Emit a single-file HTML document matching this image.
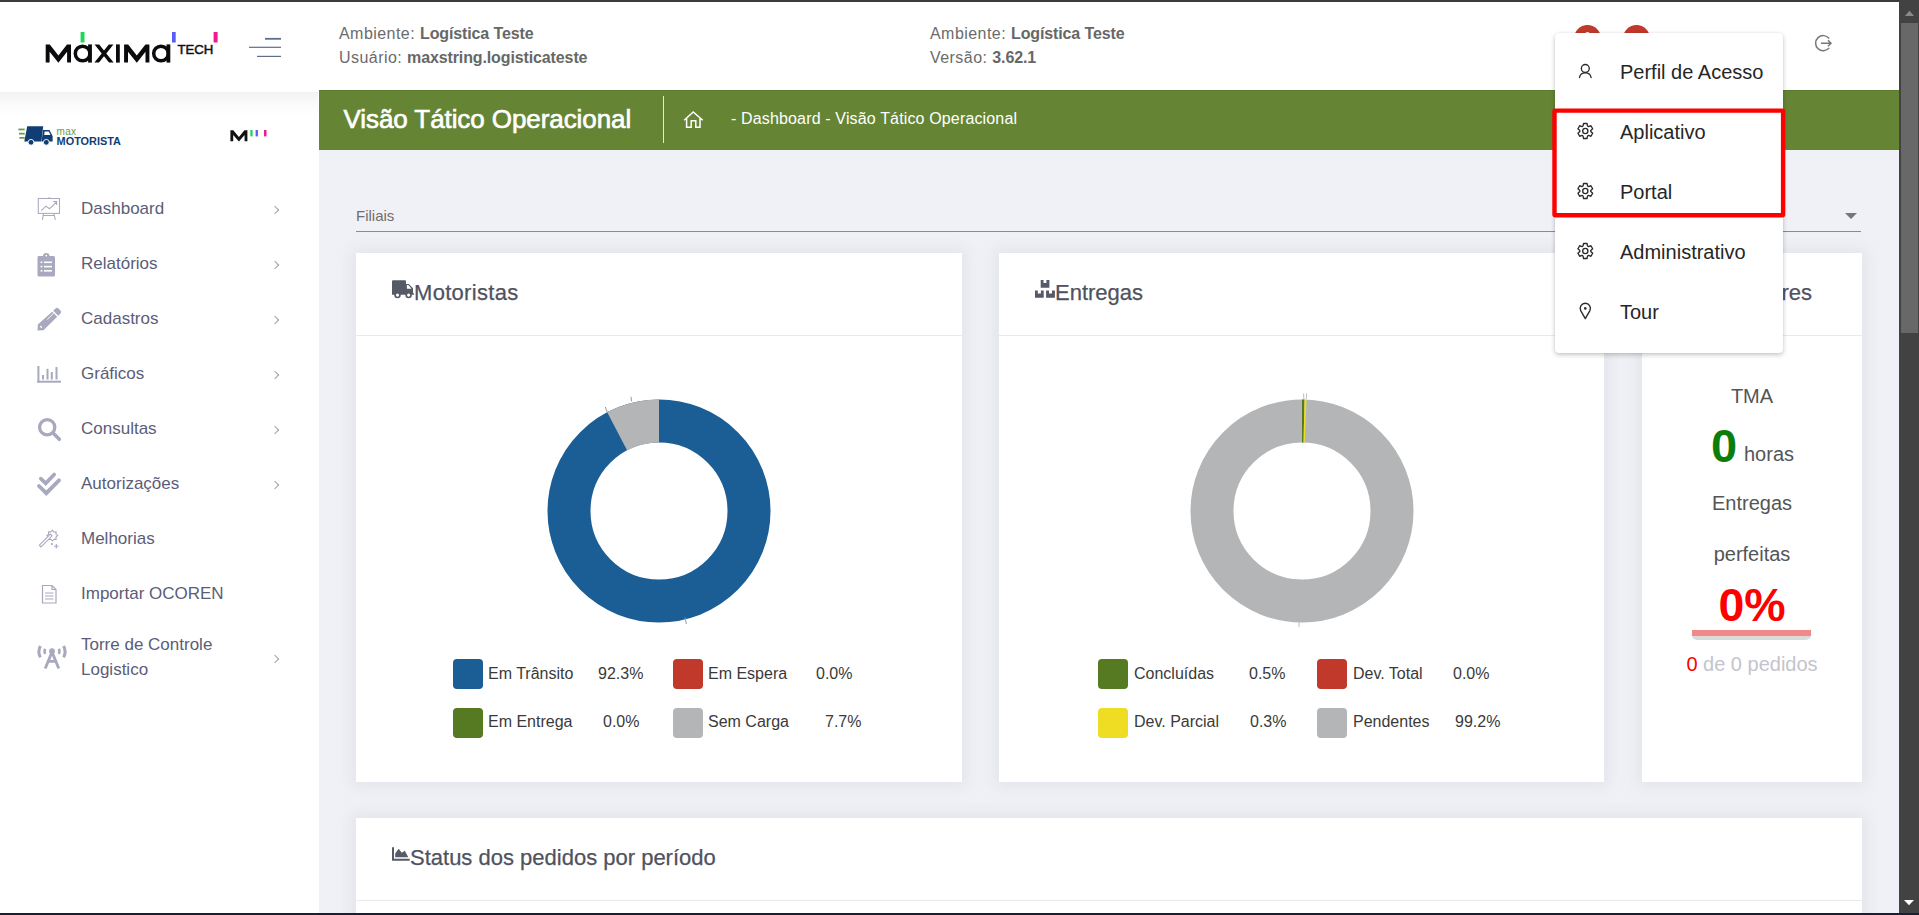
<!DOCTYPE html>
<html><head><meta charset="utf-8">
<style>
*{box-sizing:border-box;margin:0;padding:0}
html,body{width:1919px;height:915px;overflow:hidden;font-family:"Liberation Sans",sans-serif;background:#f0f1f6}
.abs{position:absolute}
.t{position:absolute;line-height:1;white-space:nowrap}
#topb{left:0;top:0;width:1919px;height:2px;background:#3c3c3c}
#botb{left:0;top:913px;width:1919px;height:2px;background:#1c1b3a}
#header{left:0;top:2px;width:1899px;height:88px;background:#fff}
#sidebar{left:0;top:90px;width:319px;height:823px;background:#fff}
#sbshadow{left:0;top:92px;width:318px;height:24px;background:linear-gradient(#f2f2f2,#fafafa 45%,#fff)}
#banner{left:319px;top:90px;width:1580px;height:60px;background:#658535;border-top:1px solid #5c7d2f}
#scroll{left:1899px;top:0;width:20px;height:913px;background:#424242}
#thumb{left:1901px;top:23px;width:17px;height:310px;background:#686868}
.card{position:absolute;background:#fff;box-shadow:0 0 14px 4px rgba(200,202,215,.35)}
.cardhd{position:absolute;left:0;top:0;right:0;height:83px;border-bottom:1px solid #e9eaf0}
.ttl{font-size:22px;color:#4f5260;-webkit-text-stroke:0.25px #4f5260}
.mt{font-size:17px;color:#5b5d78}
.ch{position:absolute;width:6px;height:6px;border-right:1.2px solid #9fa0b3;border-top:1.2px solid #9fa0b3;transform:rotate(45deg)}
.hd{font-size:16px;color:#6b6b6b}
.hd i{font-style:normal;letter-spacing:0.45px}
.hd b{color:#676767;letter-spacing:-0.12px}
.lg{font-size:16px;color:#3a3a3a}
.sq{position:absolute;width:30px;height:30px;border-radius:4px}
.dd{position:absolute;left:1555px;top:33px;width:228px;height:320px;background:#fff;border-radius:4px;box-shadow:0 2px 5px rgba(0,0,0,.22),0 0 2px rgba(0,0,0,.08)}
.di{font-size:20px;color:#262626}
svg{position:absolute;overflow:visible}
</style></head>
<body>
<div id="header" class="abs"></div>
<div id="sidebar" class="abs"></div>
<div id="sbshadow" class="abs"></div>
<div id="banner" class="abs"></div>

<!-- ===== HEADER ===== -->
<svg style="left:0;top:0" width="300" height="90">
 <g fill="none" stroke="#0b0b0d" stroke-width="3.9" stroke-linejoin="miter">
  
  <circle cx="82.6" cy="53.5" r="7.3" stroke-width="3.5"/>
  
  
  <circle cx="161" cy="53.5" r="7.3" stroke-width="3.5"/>
 </g>
 <g fill="#0b0b0d">
  <path d="M45.7 62.6 V44.4 H49.8 L58.4 55.4 L67 44.4 H71 V62.6 H67.1 V51.8 L58.4 62.8 L49.6 51.8 V62.6 Z"/>
  <rect x="88.1" y="44.4" width="3.8" height="18.2"/>
  <rect x="116" y="44.4" width="3.8" height="18.2"/><path d="M94.6 44.4 H99.2 L104 50.6 L108.8 44.4 H113.4 L106.3 53.5 L113.6 62.6 H109 L104 56.3 L99 62.6 H94.4 L101.7 53.5 Z"/>
  <path d="M124.1 62.6 V44.4 H128.2 L136.8 55.4 L145.4 44.4 H149.4 V62.6 H145.5 V51.8 L136.8 62.8 L128 51.8 V62.6 Z"/>
  <rect x="166.5" y="44.4" width="3.8" height="18.2"/>
 </g>
 <text x="177.4" y="53.9" font-family="Liberation Sans" font-size="13.2" fill="#111" stroke="#111" stroke-width="0.5">TECH</text>
 <rect x="80.6" y="32" width="3.9" height="10.5" fill="#20d558"/>
 <rect x="172" y="32" width="3.7" height="10.5" fill="#5a5cf5"/>
 <rect x="213.6" y="32" width="4" height="10.5" fill="#f5198f"/>
 <g stroke="#5d6f88">
  <line x1="265" y1="38.8" x2="281" y2="38.8" stroke-width="1.8"/>
  <line x1="249" y1="47.3" x2="281" y2="47.3" stroke-width="1.2"/>
  <line x1="257" y1="56.4" x2="281" y2="56.4" stroke-width="1.2"/>
 </g>
</svg>
<div class="t hd" style="left:339px;top:25.5px"><i>Ambiente: </i><b>Logística Teste</b></div>
<div class="t hd" style="left:339px;top:49.5px"><i>Usuário: </i><b>maxstring.logisticateste</b></div>
<div class="t hd" style="left:930px;top:25.5px"><i>Ambiente: </i><b>Logística Teste</b></div>
<div class="t hd" style="left:930px;top:49.5px"><i>Versão: </i><b>3.62.1</b></div>
<!-- red badges -->
<div class="abs" style="left:1574px;top:25px;width:27px;height:27px;border-radius:50%;background:#c0392b"></div><div class="abs" style="left:1585px;top:31.5px;width:5px;height:6px;border-radius:50%;background:#fff"></div>
<div class="abs" style="left:1622.5px;top:25px;width:27px;height:27px;border-radius:50%;background:#c0392b"></div>
<!-- logout -->
<svg style="left:1810px;top:30px" width="26" height="26" viewBox="0 0 26 26">
 <path d="M19.2 8.5 A7.6 7.6 0 1 0 19.2 17.9" fill="none" stroke="#777" stroke-width="1.5"/>
 <path d="M11 13.2 H21 M18 10.2 L21 13.2 L18 16.2" fill="none" stroke="#777" stroke-width="1.5"/>
</svg>

<!-- ===== SIDEBAR ===== -->
<svg style="left:0;top:0" width="319" height="160">
 <g fill="#6b9a3b"><rect x="18.4" y="128.6" width="6.3" height="1.7"/><rect x="19" y="132.8" width="5.7" height="1.7"/><rect x="19.4" y="137" width="5.3" height="1.7"/></g>
 <g fill="#0f3d74">
  <path d="M27.2 126.3 H43.2 L41.4 141.5 H24.3 Z"/>
  <path d="M43 130 H49.5 L52.6 136 V141.5 H41.6 Z"/>
  <circle cx="31" cy="142.3" r="2.9" stroke="#fff" stroke-width="0.9"/><circle cx="46.3" cy="142.3" r="2.9" stroke="#fff" stroke-width="0.9"/>
 </g>
 <path d="M44.6 131.4 H48.8 L50.5 135 H44.2 Z" fill="#fff"/>
 <text x="56.6" y="134.8" font-family="Liberation Sans" font-size="10" fill="#6b9a3b" letter-spacing="0.3">max</text>
 <text x="56.6" y="144.5" font-family="Liberation Sans" font-weight="bold" font-size="10.9" fill="#0f3d74">MOTORISTA</text>
 <path d="M230.4 141.3 V130.2 H233.3 L238.9 136.9 L244.5 130.2 H247.4 V141.3 H244.6 V134.9 L238.9 141.6 L233.2 134.9 V141.3 Z" fill="#111"/>
 <rect x="250.3" y="130" width="2.3" height="6.4" fill="#20d558"/>
 <rect x="255.6" y="130" width="2.3" height="6.4" fill="#5a5cf5"/>
 <rect x="264" y="130" width="2.5" height="6.4" fill="#f5198f"/>
</svg>

<!-- menu icons -->
<svg style="left:0;top:0" width="80" height="700">
 <g fill="none" stroke="#a8a9bf" stroke-width="1.2">
  <!-- dashboard easel -->
  <rect x="38.3" y="198.5" width="21.2" height="14.9" stroke-width="1.05"/>
  <path d="M41.2 210.6 L46 206.2 L49.4 208.7 L56.4 202.3 M53.3 201.6 H56.6 V205" stroke-width="1.05"/>
  <path d="M43.5 213.4 L42.5 219.8 M53.9 213.4 L55.3 219.8 M43.2 215.5 H54.2 M49.2 197 V198.5" stroke-width="1.05"/>
 </g>
 <g fill="#a8a9bf">
  <!-- clipboard -->
  <path d="M38.5 256 Q37.5 256 37.5 257.5 V275 Q37.5 276.5 39 276.5 H53.5 Q55 276.5 55 275 V257.5 Q55 256 53.5 256 H49.5 Q49.5 253 46.3 253 Q43 253 43 256 Z"/>
 </g>
 <g fill="#fff">
  <circle cx="46.3" cy="255.6" r="0.9"/><rect x="40.6" y="261.5" width="1.8" height="1.6"/><rect x="44" y="261.5" width="8" height="1.6"/>
  <rect x="40.6" y="265.8" width="1.8" height="1.6"/><rect x="44" y="265.8" width="8" height="1.6"/>
  <rect x="40.6" y="270" width="1.8" height="1.6"/><rect x="44" y="270" width="8" height="1.6"/>
 </g>
 <!-- pencil -->
 <path d="M55.5 308.5 Q57 307.2 58.5 308.5 L60.5 310.5 Q61.8 312 60.5 313.5 L58.2 315.8 L53.2 310.8 Z M52.2 311.8 L57.2 316.8 L43.5 330.3 L37.5 330.5 L37.8 324.5 Z" fill="#a8a9bf"/>
 <path d="M40.3 326 L41.8 327.8" stroke="#fff" stroke-width="1.2"/>
 <path d="M47.2 319.5 L53.5 313.5" stroke="#fff" stroke-width="0.9"/>
 <!-- chart -->
 <g fill="#a8a9bf">
  <rect x="37.4" y="366" width="2" height="16.7"/><rect x="37.4" y="380.7" width="23.6" height="2"/>
  <rect x="42" y="375" width="2" height="4.5"/><rect x="46.5" y="368.8" width="2" height="10.7"/><rect x="50.8" y="372" width="2" height="7.5"/><rect x="55.5" y="367" width="2" height="12.5"/>
 </g>
 <!-- search -->
 <circle cx="47.2" cy="427.2" r="7.6" fill="none" stroke="#a8a9bf" stroke-width="3.3"/>
 <path d="M53 433 L59.3 439.3" stroke="#a8a9bf" stroke-width="3.6" stroke-linecap="round"/>
 <!-- double check -->
 <path d="M40.8 478.6 L45.7 483.3 L54.2 474.5" fill="none" stroke="#a8a9bf" stroke-width="3.7" stroke-linecap="round"/>
 <path d="M39 486 L46.3 493.2 L59 480.3" fill="none" stroke="#a8a9bf" stroke-width="3.8" stroke-linecap="round"/>
 <!-- magic wand -->
 <g fill="none" stroke="#a8a9bf" stroke-width="1.1">
  <path d="M52.30 530.20 L53.79 532.00 L56.12 531.78 L55.90 534.11 L57.70 535.60 L55.90 537.09 L56.12 539.42 L53.79 539.20 L52.30 541.00 L50.81 539.20 L48.48 539.42 L48.70 537.09 L46.90 535.60 L48.70 534.11 L48.48 531.78 L50.81 532.00 Z"/>
  <path d="M41.05 546.85 L52.05 535.85 L50.35 534.15 L39.35 545.15 Z" fill="#fff"/>
  <path d="M54.1 546.3 H58.5 M56.3 544.1 V548.5"/>
 </g>
 <circle cx="51.9" cy="544.1" r="1.1" fill="#a8a9bf"/>
 <!-- document -->
 <path d="M42.5 585.5 H52 L56 589.5 V603 H42.5 Z M52 585.5 V589.5 H56" fill="none" stroke="#a8a9bf" stroke-width="1.2"/>
 <path d="M45 593 H53.5 M45 596 H53.5 M45 599 H53.5" stroke="#a8a9bf" stroke-width="1.2"/>
 <!-- antenna -->
 <g fill="none" stroke="#a8a9bf">
  <path d="M40.4 646 Q37.4 651.7 40.4 657.4 M63.6 646 Q66.6 651.7 63.6 657.4" stroke-width="3"/>
  <path d="M45 648.8 Q44 651.4 45 654 M59 648.8 Q60 651.4 59 654" stroke-width="2.6"/>
 </g>
 <circle cx="52" cy="651.2" r="2.9" fill="#a8a9bf"/>
 <path d="M45.2 668.5 L52 652 L58.8 668.5 M48.2 661.4 H55.8" fill="none" stroke="#a8a9bf" stroke-width="2.9"/>
</svg>

<div class="t mt" style="left:81px;top:199.6px">Dashboard</div>
<div class="t mt" style="left:81px;top:254.6px">Relatórios</div>
<div class="t mt" style="left:81px;top:309.6px">Cadastros</div>
<div class="t mt" style="left:81px;top:364.6px">Gráficos</div>
<div class="t mt" style="left:81px;top:419.6px">Consultas</div>
<div class="t mt" style="left:81px;top:474.6px">Autorizações</div>
<div class="t mt" style="left:81px;top:529.6px">Melhorias</div>
<div class="t mt" style="left:81px;top:584.6px">Importar OCOREN</div>
<div class="t mt" style="left:81px;top:635.6px">Torre de Controle</div>
<div class="t mt" style="left:81px;top:660.6px">Logistico</div>
<div class="ch" style="left:272px;top:207px"></div>
<div class="ch" style="left:272px;top:262px"></div>
<div class="ch" style="left:272px;top:317px"></div>
<div class="ch" style="left:272px;top:372px"></div>
<div class="ch" style="left:272px;top:427px"></div>
<div class="ch" style="left:272px;top:482px"></div>
<div class="ch" style="left:272px;top:656px"></div>

<!-- ===== BANNER ===== -->
<div class="t" style="left:343.5px;top:106px;font-size:26px;color:#fff;-webkit-text-stroke:0.65px #fff;letter-spacing:-0.08px">Visão Tático Operacional</div>
<div class="abs" style="left:663px;top:96px;width:1px;height:47px;background:#e4e8dc"></div>
<svg style="left:678px;top:104px" width="30" height="30" viewBox="0 0 30 30">
 <path d="M6.2 16.3 L15.2 7.9 L24.8 16.3 M8.6 14.2 V23.2 H13.2 V16.8 H17.8 V23.2 H22 V14.2" fill="none" stroke="#fff" stroke-width="1.5"/>
</svg>
<div class="t" style="left:731px;top:110.5px;font-size:16px;color:#fff;letter-spacing:0.15px">- Dashboard - Visão Tático Operacional</div>

<!-- ===== CONTENT ===== -->
<div class="t" style="left:356px;top:208.3px;font-size:15px;color:#6e6e6e">Filiais</div>
<div class="abs" style="left:356px;top:231px;width:1505px;height:1px;background:#8b8b8b"></div>
<svg style="left:1845px;top:213px" width="12" height="6"><path d="M0 0 H12 L6 6 Z" fill="#767676"/></svg>

<div class="card" style="left:356px;top:253px;width:606px;height:529px"><div class="cardhd"></div></div>
<div class="card" style="left:999px;top:253px;width:605px;height:529px"><div class="cardhd"></div></div>
<div class="card" style="left:1642px;top:253px;width:220px;height:529px"><div class="cardhd"></div></div>
<div class="card" style="left:356px;top:818px;width:1506px;height:200px"><div class="cardhd"></div></div>

<!-- card titles -->
<svg style="left:385px;top:270px" width="40" height="40" viewBox="0 0 40 40">
 <path d="M7 11.3 Q7 10.3 8 10.3 H20 Q21 10.3 21 11.3 V14 H23.8 L28 18.3 V23.3 H29 V24.7 H7 Z" fill="#565a66"/>
 <path d="M21.9 15 H23.3 L26.6 18.8 H21.9 Z" fill="#fff"/>
 <circle cx="12.5" cy="25.1" r="2.4" fill="#fff" stroke="#565a66" stroke-width="1.7"/>
 <circle cx="23.6" cy="25.1" r="2.4" fill="#fff" stroke="#565a66" stroke-width="1.7"/>
</svg>
<div class="t ttl" style="left:414px;top:282.2px;letter-spacing:0.3px">Motoristas</div>
<svg style="left:1028px;top:272px" width="40" height="40" viewBox="0 0 40 40">
 <path fill="#565a66" d="M12.7 8.1 H15.5 V11 H18.4 V8.1 H21.4 V15.7 H12.7 Z M7 18.4 H9.8 V21.4 H12.9 V18.4 H15.7 V25.8 H7 Z M18.1 18.4 H21 V21.4 H24 V18.4 H26.9 V25.8 H18.1 Z"/>
</svg>
<div class="t ttl" style="left:1055px;top:282.2px">Entregas</div>
<div class="t ttl" style="left:1642px;width:170px;text-align:right;top:282.2px">Indicadores</div>
<svg style="left:385px;top:835px" width="40" height="40" viewBox="0 0 40 40">
 <path fill="#565a66" d="M7 12.2 H9 V23.8 H24.7 V25.8 H7 Z M10.2 22.3 V18.6 L13.6 13.8 L16.8 17.8 L19.8 15.8 L23.3 22.3 Z"/>
</svg>
<div class="t ttl" style="left:410px;top:847.4px">Status dos pedidos por período</div>

<!-- donut 1 -->
<svg style="left:547px;top:399px" width="224" height="224" viewBox="-112 -112 224 224">
 <circle r="90" fill="none" stroke="#1b5e96" stroke-width="43"/>
 <path d="M0 -111.5 A111.5 111.5 0 0 0 -51.8 -98.7 L-31.8 -60.6 A68.5 68.5 0 0 1 0 -68.5 Z" fill="#b4b5b7"/>
</svg>
<!-- donut 2 -->
<svg style="left:1190px;top:399px" width="224" height="224" viewBox="-112 -112 224 224">
 <circle r="90" fill="none" stroke="#b4b5b7" stroke-width="43"/>
 <path d="M0 -111.5 A111.5 111.5 0 0 1 2.5 -111.5 L1.54 -68.5 A68.5 68.5 0 0 0 0 -68.5 Z" fill="#557a22"/>
 <path d="M2.5 -111.5 A111.5 111.5 0 0 1 4.5 -111.4 L2.76 -68.4 A68.5 68.5 0 0 0 1.54 -68.5 Z" fill="#eedd22"/>
</svg>

<svg style="left:0;top:0" width="1919" height="700">
 <g stroke="#9a9a9a" stroke-width="1" fill="none">
  <path d="M605.3 407 L607.5 412.8 M631 396.8 L631.6 401.3 M685 617.5 L686.4 624"/>
 </g>
 <g stroke="#bdbdbd" stroke-width="1" fill="none">
  <path d="M1303.6 393.5 L1303.8 398.8 M1306.6 393.5 L1306.4 398.8 M1299 621.5 L1299 627"/>
 </g>
</svg>
<!-- legend 1 -->
<div class="sq" style="left:453px;top:659px;background:#1b5e96"></div>
<div class="t lg" style="left:488px;top:665.8px">Em Trânsito</div>
<div class="t lg" style="left:598px;top:665.8px">92.3%</div>
<div class="sq" style="left:673px;top:659px;background:#c0392b"></div>
<div class="t lg" style="left:708px;top:665.8px">Em Espera</div>
<div class="t lg" style="left:816px;top:665.8px">0.0%</div>
<div class="sq" style="left:453px;top:708px;background:#557a22"></div>
<div class="t lg" style="left:488px;top:714.2px">Em Entrega</div>
<div class="t lg" style="left:603px;top:714.2px">0.0%</div>
<div class="sq" style="left:673px;top:708px;background:#b4b5b7"></div>
<div class="t lg" style="left:708px;top:714.2px">Sem Carga</div>
<div class="t lg" style="left:825px;top:714.2px">7.7%</div>

<!-- legend 2 -->
<div class="sq" style="left:1098px;top:659px;background:#557a22"></div>
<div class="t lg" style="left:1134px;top:665.8px">Concluídas</div>
<div class="t lg" style="left:1249px;top:665.8px">0.5%</div>
<div class="sq" style="left:1317px;top:659px;background:#c0392b"></div>
<div class="t lg" style="left:1353px;top:665.8px">Dev. Total</div>
<div class="t lg" style="left:1453px;top:665.8px">0.0%</div>
<div class="sq" style="left:1098px;top:708px;background:#eedd22"></div>
<div class="t lg" style="left:1134px;top:714.2px">Dev. Parcial</div>
<div class="t lg" style="left:1250px;top:714.2px">0.3%</div>
<div class="sq" style="left:1317px;top:708px;background:#b4b5b7"></div>
<div class="t lg" style="left:1353px;top:714.2px">Pendentes</div>
<div class="t lg" style="left:1455px;top:714.2px">99.2%</div>

<!-- card 3 -->
<div class="t" style="left:1642px;width:220px;text-align:center;top:386.1px;font-size:20px;color:#555">TMA</div>
<div class="t" style="left:1711px;top:421.6px;font-size:47px;font-weight:bold;color:#0b7d0b">0</div>
<div class="t" style="left:1744px;top:443.8px;font-size:20px;color:#555">horas</div>
<div class="t" style="left:1642px;width:220px;text-align:center;top:493.4px;font-size:20px;color:#555">Entregas</div>
<div class="t" style="left:1642px;width:220px;text-align:center;top:543.8px;font-size:20px;color:#555">perfeitas</div>
<div class="t" style="left:1642px;width:220px;text-align:center;top:582.4px;font-size:46.5px;font-weight:bold;color:#ff0000">0%</div>
<div class="abs" style="left:1692px;top:630px;width:119px;height:10px;border-radius:0 0 5px 5px;background:#dadada"></div>
<div class="abs" style="left:1692px;top:630px;width:119px;height:6px;background:#f08a8a"></div>
<div class="t" style="left:1642px;width:220px;text-align:center;top:654.1px;font-size:20px;color:#c4c4cc"><span style="color:#ff0000">0</span> de 0 pedidos</div>

<!-- ===== DROPDOWN ===== -->
<div class="dd"></div>
<svg style="left:0;top:0" width="1919" height="400">
 <g fill="none" stroke="#2a2a2a" stroke-width="1.35">
  <circle cx="1585.3" cy="68.4" r="3.95"/>
  <path d="M1579.5 77.5 Q1580.3 72.8 1585.3 72.8 Q1590.3 72.8 1591.1 77.5" stroke-linecap="round"/>
  <path id="gear" transform="translate(1585.3 131)" stroke-linejoin="round" d="M-2.24 -5.02 L-1.73 -7.50 L1.73 -7.50 L2.24 -5.02 L3.23 -4.45 L5.63 -5.25 L7.36 -2.25 L5.47 -0.57 L5.47 0.57 L7.36 2.25 L5.63 5.25 L3.23 4.45 L2.24 5.02 L1.73 7.50 L-1.73 7.50 L-2.24 5.02 L-3.23 4.45 L-5.63 5.25 L-7.36 2.25 L-5.47 0.57 L-5.47 -0.57 L-7.36 -2.25 L-5.63 -5.25 L-3.23 -4.45 Z"/>
  <circle cx="1585.3" cy="131" r="2.6"/>
  <path transform="translate(1585.3 191)" stroke-linejoin="round" d="M-2.24 -5.02 L-1.73 -7.50 L1.73 -7.50 L2.24 -5.02 L3.23 -4.45 L5.63 -5.25 L7.36 -2.25 L5.47 -0.57 L5.47 0.57 L7.36 2.25 L5.63 5.25 L3.23 4.45 L2.24 5.02 L1.73 7.50 L-1.73 7.50 L-2.24 5.02 L-3.23 4.45 L-5.63 5.25 L-7.36 2.25 L-5.47 0.57 L-5.47 -0.57 L-7.36 -2.25 L-5.63 -5.25 L-3.23 -4.45 Z"/>
  <circle cx="1585.3" cy="191" r="2.6"/>
  <path transform="translate(1585.3 251)" stroke-linejoin="round" d="M-2.24 -5.02 L-1.73 -7.50 L1.73 -7.50 L2.24 -5.02 L3.23 -4.45 L5.63 -5.25 L7.36 -2.25 L5.47 -0.57 L5.47 0.57 L7.36 2.25 L5.63 5.25 L3.23 4.45 L2.24 5.02 L1.73 7.50 L-1.73 7.50 L-2.24 5.02 L-3.23 4.45 L-5.63 5.25 L-7.36 2.25 L-5.47 0.57 L-5.47 -0.57 L-7.36 -2.25 L-5.63 -5.25 L-3.23 -4.45 Z"/>
  <circle cx="1585.3" cy="251" r="2.6"/>
  <path d="M1585.3 318.6 L1580.7 310.6 A5.1 5.1 0 1 1 1589.9 310.6 Z" stroke-linejoin="round"/>
 </g>
 <circle cx="1585.3" cy="308.4" r="1.3" fill="#2a2a2a"/>
</svg>
<div class="t di" style="left:1620px;top:62.1px">Perfil de Acesso</div>
<div class="t di" style="left:1620px;top:122.1px">Aplicativo</div>
<div class="t di" style="left:1620px;top:182.1px">Portal</div>
<div class="t di" style="left:1620px;top:242.1px">Administrativo</div>
<div class="t di" style="left:1620px;top:302.1px">Tour</div>
<svg style="left:0;top:0" width="1919" height="300"><rect x="1554.5" y="110.6" width="228.6" height="104.6" rx="1" fill="none" stroke="#ff0000" stroke-width="4.4"/></svg>

<!-- frame -->
<div id="topb" class="abs"></div>
<div id="botb" class="abs"></div>
<div id="scroll" class="abs"></div>
<div id="thumb" class="abs"></div>
<svg style="left:1899px;top:0" width="20" height="915">
 <path d="M5.9 16 L10.5 10.8 L15 16 Z" fill="#8a8a8a"/>
 <path d="M5 900 L10 905.3 L15 900 Z" fill="#fff"/>
</svg>
</body></html>
